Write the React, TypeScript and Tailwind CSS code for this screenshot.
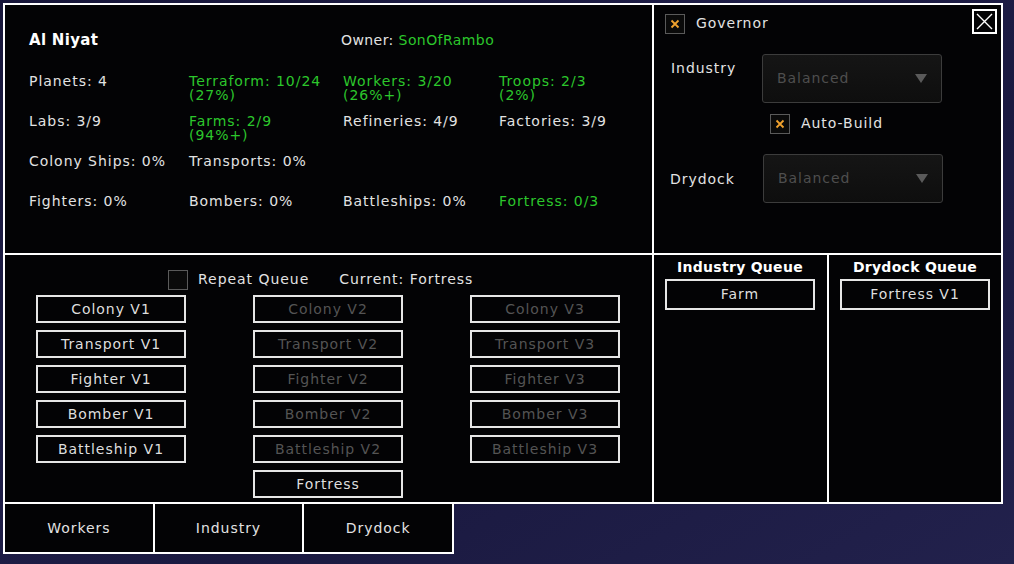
import React from "react";

const green = "text-[#2cc72c]";

function Check({ on }: { on?: boolean }) {
  return (
    <div className="w-[20px] h-[20px] border border-[#5a5a5a] bg-[#0a0a0a] flex items-center justify-center">
      {on && (
        <svg width="10" height="10" viewBox="0 0 10 10">
          <path d="M1.5 1.5 L8.5 8.5 M8.5 1.5 L1.5 8.5" stroke="#f0a22e" strokeWidth="1.8" />
        </svg>
      )}
    </div>
  );
}

function Select() {
  return (
    <div className="w-[180px] h-[49px] rounded-[3px] border border-[#3c3c3c] bg-[linear-gradient(180deg,#151515,#0e0e0e)] flex items-center justify-between pl-[14px] pr-[14px]">
      <span className="text-[#4e4e4e] text-[14px]">Balanced</span>
      <svg width="12" height="9" viewBox="0 0 12 9">
        <path d="M0 0 H12 L6 9 Z" fill="#5a5a5a" />
      </svg>
    </div>
  );
}

function Btn({ label, dim }: { label: string; dim?: boolean }) {
  return (
    <div
      className={`w-[150px] h-[28px] border-2 border-[#e6e6e6] flex items-center justify-center text-[14px] ${
        dim ? "text-[#545454]" : "text-[#dedede]"
      }`}
    >
      {label}
    </div>
  );
}

function Stat({ a, b, g }: { a: string; b?: string; g?: boolean }) {
  return (
    <div className={`leading-[14px] text-[14px] ${g ? green : "text-[#e2e2e2]"}`}>
      <div>{a}</div>
      {b && <div>{b}</div>}
    </div>
  );
}

export default function App() {
  const col1 = ["Colony V1", "Transport V1", "Fighter V1", "Bomber V1", "Battleship V1"];
  const col2 = ["Colony V2", "Transport V2", "Fighter V2", "Bomber V2", "Battleship V2"];
  const col3 = ["Colony V3", "Transport V3", "Fighter V3", "Bomber V3", "Battleship V3"];

  return (
    <div
      className="w-[1014px] h-[564px] overflow-hidden bg-[linear-gradient(150deg,#17163a_0%,#1f1e48_40%,#1a1940_60%,#22214c_100%)] pl-[3px] pt-[3px] tracking-[0.06em]"
      style={{ fontFamily: '"DejaVu Sans", "Noto Sans", sans-serif' }}
    >
      {/* MAIN GRID */}
      <div className="w-[1000px] grid grid-cols-[647px_173px_172px] grid-rows-[248px_247px] gap-[2px] p-[2px] bg-white">
        {/* PLANET INFO */}
        <div className="bg-[#030305] pl-[24px] pt-[27px]">
          <div className="grid grid-cols-[312px_1fr] h-[42px]">
            <div className="text-white font-bold text-[15px] leading-[16px] tracking-[0.02em]">Al Niyat</div>
            <div className="text-[#e2e2e2] text-[14px] leading-[16px] tracking-[0.03em]">
              Owner: <span className={green}>SonOfRambo</span>
            </div>
          </div>
          <div className="grid grid-cols-[160px_154px_156px_1fr] auto-rows-[40px]">
            <Stat a="Planets: 4" />
            <Stat a="Terraform: 10/24" b="(27%)" g />
            <Stat a="Workers: 3/20" b="(26%+)" g />
            <Stat a="Troops: 2/3" b="(2%)" g />
            <Stat a="Labs: 3/9" />
            <Stat a="Farms: 2/9" b="(94%+)" g />
            <Stat a="Refineries: 4/9" />
            <Stat a="Factories: 3/9" />
            <Stat a="Colony Ships: 0%" />
            <Stat a="Transports: 0%" />
            <div />
            <div />
            <Stat a="Fighters: 0%" />
            <Stat a="Bombers: 0%" />
            <Stat a="Battleships: 0%" />
            <Stat a="Fortress: 0/3" g />
          </div>
        </div>

        {/* GOVERNOR */}
        <div className="col-span-2 bg-[#030305] pl-[11px] pr-[4px] pt-[4px] text-[#e2e2e2] text-[14px]">
          <div className="flex items-start">
            <div className="mt-[4px] flex items-center gap-[11px]">
              <Check on />
              <span>Governor</span>
            </div>
            <div className="ml-auto w-[25px] h-[25px] border-2 border-white flex items-center justify-center">
              <svg width="17" height="17" viewBox="0 0 17 17">
                <path d="M1 1 L16 16 M16 1 L1 16" stroke="white" strokeWidth="1.4" />
              </svg>
            </div>
          </div>
          <div className="flex items-start mt-[20px]">
            <div className="w-[97px] pl-[6px] pt-[6px] leading-[16px]">Industry</div>
            <Select />
          </div>
          <div className="flex items-center gap-[11px] ml-[105px] mt-[10px]">
            <Check on />
            <span>Auto-Build</span>
          </div>
          <div className="flex items-center mt-[20px]">
            <div className="w-[98px] pl-[5px] leading-[16px]">Drydock</div>
            <Select />
          </div>
        </div>

        {/* BUILD */}
        <div className="bg-[#030305] pt-[14px] pl-[31px] text-[14px]">
          <div className="flex items-center ml-[132px] text-[#e2e2e2]">
            <Check />
            <span className="ml-[10px]">Repeat Queue</span>
            <span className="ml-[30px]">Current: Fortress</span>
          </div>
          <div className="flex gap-[67px] mt-[5px]">
            <div className="flex flex-col gap-[7px]">
              {col1.map((l) => (
                <Btn key={l} label={l} />
              ))}
            </div>
            <div className="flex flex-col gap-[7px]">
              {col2.map((l) => (
                <Btn key={l} label={l} dim />
              ))}
              <Btn label="Fortress" />
            </div>
            <div className="flex flex-col gap-[7px]">
              {col3.map((l) => (
                <Btn key={l} label={l} dim />
              ))}
            </div>
          </div>
        </div>

        {/* INDUSTRY QUEUE */}
        <div className="bg-[#030305] pt-[4px] pl-[11px]">
          <div className="w-[150px] text-center text-white font-bold text-[14px] leading-[16px] tracking-[0.02em]">Industry Queue</div>
          <div className="mt-[4px] w-[150px] h-[31px] border-2 border-[#e6e6e6] flex items-center justify-center text-[14px] text-[#dedede]">
            Farm
          </div>
        </div>

        {/* DRYDOCK QUEUE */}
        <div className="bg-[#030305] pt-[4px] pl-[11px]">
          <div className="w-[150px] text-center text-white font-bold text-[14px] leading-[16px] tracking-[0.02em]">Drydock Queue</div>
          <div className="mt-[4px] w-[150px] h-[31px] border-2 border-[#e6e6e6] flex items-center justify-center text-[14px] text-[#dedede]">
            Fortress V1
          </div>
        </div>
      </div>

      {/* TABS */}
      <div className="w-[451px] h-[50px] grid grid-cols-3 gap-[2px] px-[2px] pb-[2px] bg-white">
        {["Workers", "Industry", "Drydock"].map((t) => (
          <div key={t} className="bg-[#030305] flex items-center justify-center text-[14px] text-[#e2e2e2]">
            {t}
          </div>
        ))}
      </div>
    </div>
  );
}
